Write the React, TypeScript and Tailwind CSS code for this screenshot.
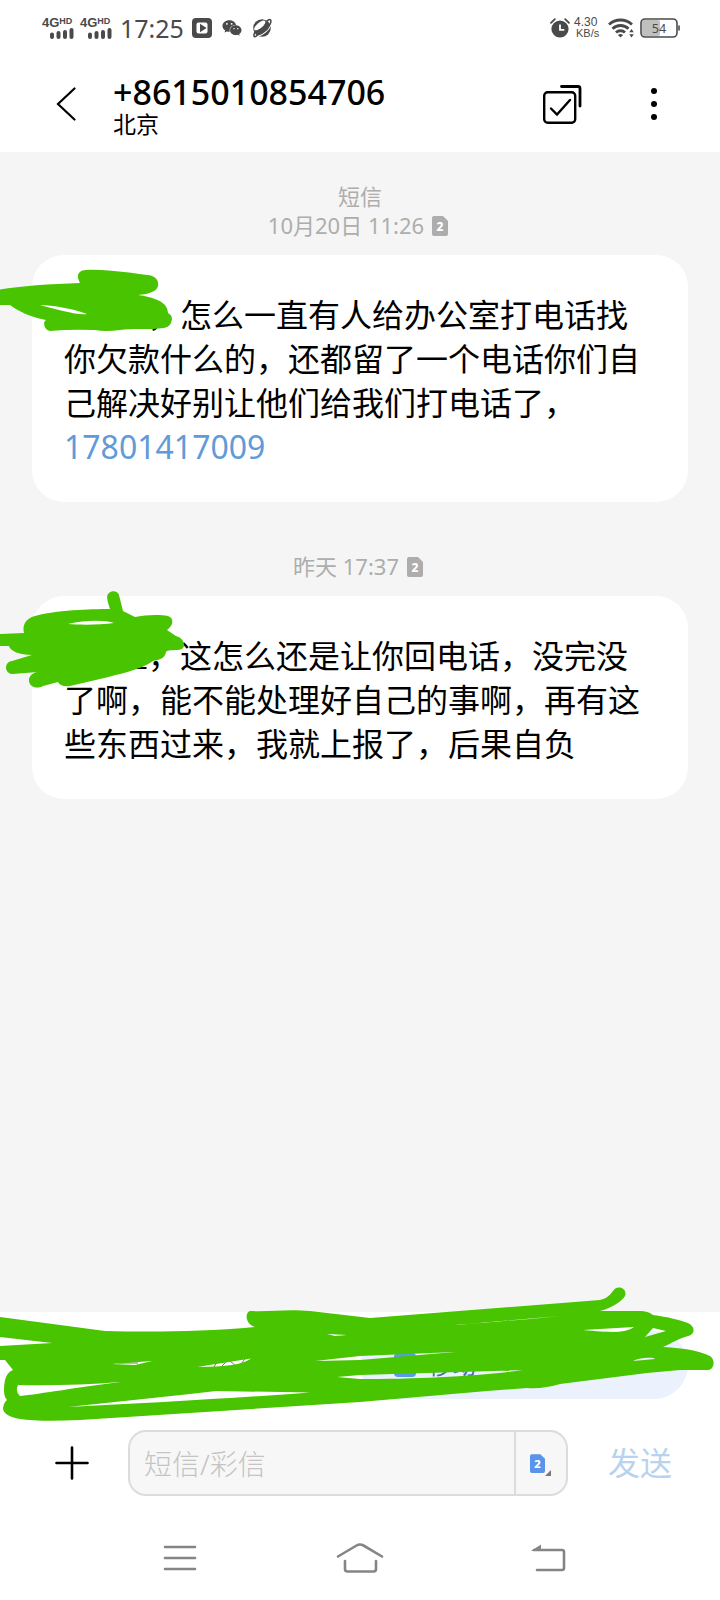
import { FaWeixin } from 'react-icons/fa'

function SignalIcon() {
  return (
    <div className="flex w-8 flex-col font-['Liberation_Sans',sans-serif] text-[#4a4a4a]">
      <div className="flex items-start leading-none">
        <span className="text-[13px] leading-[11px] font-bold">4G</span>
        <span className="text-[9px] leading-[8px] font-bold">HD</span>
      </div>
      <svg viewBox="0 0 32 11" className="h-[11px] w-8" stroke="currentColor" strokeWidth="4" strokeLinecap="round">
        <path d="M10 6.500v2.500M16.500 5v4M23 4v5M29.500 2v7" />
      </svg>
    </div>
  )
}

function StatusBar() {
  return (
    <div className="flex h-14 items-center justify-between pr-10 pl-[42px] text-[#4a4a4a]">
      <div className="flex items-center">
        <SignalIcon />
        <div className="w-1.5" />
        <SignalIcon />
        <span className="ml-2 text-[25px] leading-7">17:25</span>

        {/* Video app */}
        <svg viewBox="0 0 20 20" className="ml-2 size-5">
          <rect width="20" height="20" rx="4" fill="currentColor" />
          <path d="M4.500 6.500q0-2 2-2h7q2 0 2 2v7q0 2-2 2h-7q-2 0-2-2z" fill="#fff" />
          <path d="M8 5.800v8.400l6.600-4.200z" fill="currentColor" />
        </svg>
        <FaWeixin className="ml-2.5 size-5" />

        {/* Ringed planet */}
        <svg viewBox="0 0 20 20" className="ml-2.5 size-5">
          <circle cx="10" cy="10" r="8.800" fill="currentColor" />
          <g transform="rotate(-40 10 10)">
            <ellipse cx="10" cy="6.600" rx="7" ry="2.700" fill="#fff" />
            <path d="M0 12.500C5 16.500 15 16.500 20 12.500" fill="none" stroke="#fff" strokeWidth="1" />
            <path d="M2 8.500C-3 11-2 13 2 12.500M17.500 8C23 7 23 10.500 18 12.500" fill="none" stroke="currentColor" strokeWidth="1.600" />
          </g>
        </svg>
      </div>

      <div className="flex items-center">
        {/* Alarm */}
        <svg viewBox="0 0 20 20" className="size-5">
          <circle cx="10" cy="11" r="8.600" fill="currentColor" />
          <path d="M1 4.800 4.800 1.200M19 4.800 15.200 1.200" stroke="currentColor" strokeWidth="1.800" strokeLinecap="round" />
          <path d="M10 6.500v5.300h4.300" stroke="#fff" strokeWidth="1.800" fill="none" />
        </svg>
        <div className="ml-1 flex w-7 flex-col font-['Liberation_Sans',sans-serif] text-[12px] leading-[11px]">
          <span>4.30</span>
          <span className="pl-0.5 text-[11px]">KB/s</span>
        </div>

        {/* Wifi */}
        <svg viewBox="0 0 26 20" className="ml-1.5 h-5 w-[26px]" fill="none" stroke="currentColor" strokeWidth="2.800">
          <path d="M1 6.500C7.500.500 17.500.500 24 6.500M4.500 10.800c4.500-4.400 11.500-4.400 16 0M8 14.600c2.500-2.500 6.500-2.500 9 0" />
          <path d="m12.500 19.500-2.600-2.600q2.600-2 5.200 0z" fill="currentColor" stroke="none" />
          <path d="m23.500 11 2.300 3.200h-4.600zM23.500 19.500l2.300-3.200h-4.600z" fill="currentColor" stroke="none" />
        </svg>

        {/* Battery */}
        <svg viewBox="0 0 40 20" className="ml-1.5 h-5 w-10">
          <rect x="2" y="2" width="18" height="16" rx="2" fill="#c0c0c0" />
          <rect x="1" y="1" width="36" height="18" rx="4" fill="none" stroke="currentColor" strokeWidth="1.600" />
          <path d="M39 7.500v5" stroke="currentColor" strokeWidth="1.600" />
          <text x="19" y="14.500" textAnchor="middle" fontSize="12.500" fill="currentColor">54</text>
        </svg>
      </div>
    </div>
  )
}

function Header() {
  return (
    <header className="flex h-24 items-center pr-[62px] pl-14">
      <button aria-label="返回" className="mr-9">
        <svg viewBox="0 0 21 34" className="h-[34px] w-[21px]" fill="none" stroke="#000" strokeWidth="2.200" strokeLinecap="round">
          <path d="M18.500 1.500 2 17l16.500 15.500" />
        </svg>
      </button>
      <div className="flex flex-1 flex-col">
        <h1 className="text-[34px] leading-10 font-medium">+8615010854706</h1>
        <span className="text-[23px] leading-6">北京</span>
      </div>
      <button aria-label="选择" className="mr-[68px]">
        <svg viewBox="0 0 40 40" className="size-10" fill="none" stroke="#000" strokeWidth="2.400" strokeLinecap="round">
          <rect x="2.200" y="8.200" width="31" height="30.500" rx="3.500" />
          <path d="M19.500 2.500H36q2 0 2 2V22" strokeWidth="2.800" />
          <path d="m9 24.500 6 6 13-14.500" />
        </svg>
      </button>
      <button aria-label="更多">
        <svg viewBox="0 0 8 34" className="h-[34px] w-2">
          <circle cx="4" cy="4" r="3" />
          <circle cx="4" cy="17" r="3" />
          <circle cx="4" cy="30" r="3" />
        </svg>
      </button>
    </header>
  )
}

function SimIcon({ className }: { className: string }) {
  return (
    <svg viewBox="0 0 16 20" className={className}>
      <path d="M2 0h9l5 5v13q0 2-2 2H2q-2 0-2-2V2q0-2 2-2z" fill="currentColor" />
      <text x="8" y="14.500" textAnchor="middle" fontSize="12" fontWeight="800" fill="#fff">2</text>
    </svg>
  )
}

function DateLine({ children }: { children: string }) {
  return (
    <div className="mb-[15px] flex items-center justify-center gap-2 pr-1 text-[22px] leading-[29px] text-[#adadad]">
      <time>{children}</time>
      <SimIcon className="h-5 w-4" />
    </div>
  )
}

/* Blank where the name was */
function HiddenName() {
  return <span className="inline-block w-[84px]" />
}

const bubble = 'relative rounded-[32px] bg-white px-8 pt-[38px] pb-[33px] text-[32px] leading-[44px]'

function Conversation() {
  return (
    <main className="flex-1 bg-[#f5f5f5] px-8 pt-[29px]">
      <p className="text-center text-[22px] leading-[30px] text-[#adadad]">短信</p>
      <DateLine>10月20日 11:26</DateLine>
      <div className={bubble}>
        <p>
          <HiddenName />
          {'\uff0c怎么一直有人给办公室打电话找你欠款什么的\uff0c还都留了一个电话你们自己解决好别让他们给我们打电话了\uff0c'}
        </p>
        <a href="tel:17801417009" className="text-[#5f9bd8]">17801417009</a>
        <svg viewBox="0 255 200 100" className="absolute top-0 -left-8 h-[100px] w-[200px]">
          <path
            fill="#48c400"
            fillRule="evenodd"
            d="M0 289.500C20 286 50 284 80 283C78 279 77 275 79 273Q81 270 86 270C110 269 135 274 148 275C156 276 159 281 158 286C157 291 150 294 138 295C152 297 160 300 165 305Q168 309 168 313Q172 315 172 319Q171 327 164 328C150 330 130 328 120 330Q105 332 95 330Q70 329 50 331Q45 330 44 324Q44 321 46 320C30 317 18 311 10 305L0 305ZM40 305C52 305 75 309 87 314C80 316 55 309 40 305Z"
          />
        </svg>
      </div>

      <div className="h-[50px]" />
      <DateLine>昨天 17:37</DateLine>
      <div className={bubble}>
        <p>
          <HiddenName />
          {'\uff0c这怎么还是让你回电话\uff0c没完没了啊\uff0c能不能处理好自己的事啊\uff0c再有这些东西过来\uff0c我就上报了\uff0c后果自负'}
        </p>
        <svg viewBox="0 586 200 110" className="absolute -top-2.5 -left-8 h-[110px] w-[200px]">
          <path d="M130 668h16.500" stroke="#000" strokeWidth="2" />
          <path
            fill="#48c400"
            fillRule="evenodd"
            d="M0 634L24 633C22 625 26 618 35 616C55 610 90 609 110 609C107 600 106 595 109 593C112 590 118 591 119 595L123 611L135 617C145 615 158 614 168 616C174 618 174 625 167 630L176 636C184 638 186 646 182 649C178 651 168 649 166 652C165 659 158 660 153 661C140 670 120 674 100 679L70 686C65 687 60 686 58 682L43 686C36 690 28 686 29 679C30 675 34 672 38 672L12 674C4 673 4 662 12 661L32 655C20 655 10 651 9 646L0 646ZM68 624C85 620 105 620 114 623C100 625 80 625 68 624Z"
          />
        </svg>
      </div>
    </main>
  )
}

function Suggestions() {
  return (
    <div className="relative flex h-[118px] items-start justify-end px-8 pt-[19px]">
      <button className="flex h-[68px] w-[328px] items-center gap-3 rounded-full bg-[#ebf1fd] pl-[34px] text-[24px] text-[#3f6fb0]">
        <span className="h-6 w-[22px] rounded-sm bg-[#5a9be6]" />
        移动
      </button>
      <svg viewBox="0 1280 720 150" className="absolute -top-8 left-0 w-full">
        <path d="M118 1363h20M200 1366l6-4M214 1367l4-7M222 1366l7-7M230 1361l6 5M240 1365l5-6" stroke="#777" />
        <path
          fill="#48c400"
          fillRule="evenodd"
          d="M0 1317L105 1331C150 1332 200 1332 255 1327C246 1325 244 1313 250 1311C270 1312 285 1309 310 1311L370 1318L600 1300C610 1298 612 1291 616 1288C622 1286 627 1290 625 1296C622 1301 612 1308 600 1311L637 1311C648 1311 650 1313 653 1315C668 1317 680 1320 688 1323C695 1326 696 1334 688 1336C680 1338 672 1343 663 1347C685 1348 700 1351 710 1356C716 1360 714 1370 708 1370L680 1370L647 1373L560 1384C550 1387 538 1389 527 1388L487 1391L360 1402L80 1420Q40 1422 20 1419Q3 1416 3 1408Q4 1402 7 1400Q4 1397 4 1390Q4 1373 13 1370L5 1360L0 1360ZM0 1337L52 1343L0 1346ZM18 1385Q70 1386 120 1382C80 1387 40 1394 20 1396Q15 1392 18 1385ZM68 1407L190 1394L216 1391L310 1392.500C250 1397 150 1403 68 1407ZM112 1364L152 1361L135 1365ZM197 1367L251 1358.500Q240 1367 197 1367ZM327 1334L347 1335L335 1336ZM315 1361L360 1356L455 1352L360 1360ZM337 1377L360 1375L523 1370C480 1376 420 1379 360 1379ZM455 1325L560 1316L530 1319ZM583 1330L634 1327C625 1333 615 1333 583 1330ZM645 1337L653 1328L666 1331ZM633 1361C640 1357 655 1357 655 1359Z"
        />
      </svg>
    </div>
  )
}

function Composer() {
  return (
    <form className="flex items-center pr-12 pl-[55px]" onSubmit={(e) => e.preventDefault()}>
      <button type="button" aria-label="添加">
        <svg viewBox="0 0 34 34" className="size-[34px]" stroke="#000" strokeWidth="2.600" strokeLinecap="round">
          <path d="M17 1.500v31M1.500 17h31" />
        </svg>
      </button>
      <div className="mr-10 ml-[39px] flex h-[66px] min-w-0 flex-1 rounded-[18px] border-2 border-[#dcdcdc] bg-[#f7f7f7]">
        <input
          aria-label="短信/彩信"
          placeholder="短信/彩信"
          className="min-w-0 flex-1 bg-transparent px-3.5 pt-0.5 text-[28px] font-light outline-none placeholder:text-[#c4c4c4]"
        />
        <button type="button" aria-label="SIM 2" className="flex w-[52px] items-center justify-center border-l-2 border-[#dcdcdc] text-[#5a94ea]">
          <SimIcon className="h-[19px] w-[15px]" />
          <svg viewBox="0 0 6 6" className="mt-5 size-1.5" fill="#777">
            <path d="M6 0v6H0z" />
          </svg>
        </button>
      </div>
      <button className="text-[32px] leading-10 text-[#b9d3ef]">发送</button>
    </form>
  )
}

function NavBar() {
  return (
    <nav className="flex h-[104px] items-center justify-between pt-5 pr-[154px] pl-[163px]">
      <button aria-label="菜单">
        <svg viewBox="0 0 34 28" className="h-7 w-[34px]" stroke="#858585" strokeWidth="2.600" strokeLinecap="round">
          <path d="M2 3h30M2 14h30M2 25h30" />
        </svg>
      </button>
      <button aria-label="主屏幕" className="mr-2">
        <svg viewBox="0 0 48 32" className="h-8 w-12" fill="none" stroke="#858585" strokeWidth="2.600" strokeLinecap="round">
          <path d="M2 14.500 20.500 3.500q3.500-2 7 0L46 14.500M9 19v8q0 2.500 2.500 2.500h26q2.500 0 2.500-2.500v-8" />
        </svg>
      </button>
      <button aria-label="后退">
        <svg viewBox="0 0 36 30" className="h-[30px] w-9" fill="none" stroke="#858585" strokeWidth="2.600" strokeLinecap="round">
          <path d="M4 7h28q2 0 2 2v16q0 2-2 2H7" />
          <path d="M1 8l10-6.500V8z" fill="#858585" stroke="none" />
        </svg>
      </button>
    </nav>
  )
}

export default function App() {
  return (
    <div
      lang="zh-CN"
      className="flex min-h-screen flex-col bg-white font-['Noto_Sans','Noto_Sans_CJK_SC',sans-serif] text-black"
    >
      <StatusBar />
      <Header />
      <Conversation />
      <Suggestions />
      <Composer />
      <NavBar />
    </div>
  )
}
